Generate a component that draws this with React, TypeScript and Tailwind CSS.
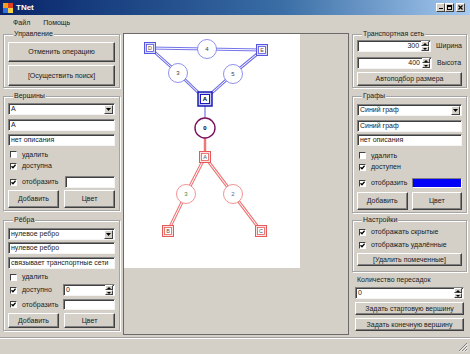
import React from 'react';

type Kids = { children?: React.ReactNode; className?: string };

const Btn: React.FC<Kids> = ({ children, className = '' }) => (
  <button
    type="button"
    className={`flex items-center justify-center bg-[#d4d0c8] border border-t-white border-l-white border-r-[#404040] border-b-[#404040] shadow-[inset_-1px_-1px_0_#808080] text-[7px] leading-[8px] text-[#202020] ${className}`}
  >
    {children}
  </button>
);

const Field: React.FC<Kids> = ({ children, className = '' }) => (
  <div
    className={`flex items-center bg-white border border-t-[#808080] border-l-[#808080] border-r-[#f4f4f4] border-b-[#f4f4f4] shadow-[inset_1px_1px_0_#404040] pl-[2px] overflow-hidden whitespace-nowrap ${className}`}
  >
    {children}
  </div>
);

const Combo: React.FC<{ value: string; className?: string }> = ({ value, className = '' }) => (
  <Field className={`h-[12px] pr-[1px] ${className}`}>
    <span className="flex-1">{value}</span>
    <span className="flex items-center justify-center w-[9px] h-[9px] bg-[#d4d0c8] border border-t-white border-l-white border-r-[#404040] border-b-[#404040]">
      <svg width="5" height="3" viewBox="0 0 5 3">
        <path d="M0 0 H5 L2.5 3 Z" fill="#000" />
      </svg>
    </span>
  </Field>
);

const Spin: React.FC<{ value: string; right?: boolean; className?: string }> = ({ value, right, className = '' }) => (
  <Field className={`h-[12px] pr-[1px] ${className}`}>
    <span className={`flex-1 ${right ? 'text-right pr-[2px]' : ''}`}>{value}</span>
    <span className="flex flex-col w-[8px] h-[10px]">
      <span className="flex-1 flex items-center justify-center bg-[#d4d0c8] border-[0.5px] border-t-white border-l-white border-r-[#404040] border-b-[#404040]">
        <svg width="4" height="2" viewBox="0 0 4 2">
          <path d="M0 2 H4 L2 0 Z" fill="#000" />
        </svg>
      </span>
      <span className="flex-1 flex items-center justify-center bg-[#d4d0c8] border-[0.5px] border-t-white border-l-white border-r-[#404040] border-b-[#404040]">
        <svg width="4" height="2" viewBox="0 0 4 2">
          <path d="M0 0 H4 L2 2 Z" fill="#000" />
        </svg>
      </span>
    </span>
  </Field>
);

const Check: React.FC<{ label: string; checked?: boolean; className?: string }> = ({ label, checked, className = '' }) => (
  <div className={`flex items-center pl-[2px] gap-[5px] ${className}`}>
    <span className="flex items-center justify-center w-[7px] h-[7px] bg-white border-[0.5px] border-t-[#404040] border-l-[#404040] border-r-white border-b-white">
      {checked && (
        <svg width="5" height="5" viewBox="0 0 5 5">
          <path d="M0.5 2.2 L2 3.8 L4.6 0.8" stroke="#000" strokeWidth="1.3" fill="none" />
        </svg>
      )}
    </span>
    <span>{label}</span>
  </div>
);

const Group: React.FC<Kids & { title: string }> = ({ title, children, className = '' }) => (
  <fieldset
    className={`min-w-0 border border-[#a4a4a4] shadow-[inset_1px_1px_0_#fff,1px_1px_0_#fff] px-[4px] flex flex-col ${className}`}
  >
    <legend className="ml-[5px] px-[1px] h-[8px] leading-[8px] bg-[#d4d0c8]">{title}</legend>
    {children}
  </fieldset>
);

const TitleBar = () => (
  <div className="h-[15px] flex items-center bg-linear-to-r from-[#0a246a] via-[#3a6ea5] via-60% to-[#a6caf0] pl-[3px] pr-[5px]">
    <svg width="10" height="10" viewBox="0 0 10 10">
      <rect x="0" y="0" width="5" height="5" fill="#f0a020" />
      <rect x="5" y="0" width="5" height="5" fill="#e04020" />
      <rect x="0" y="5" width="5" height="5" fill="#3070e0" />
      <rect x="5" y="5" width="5" height="5" fill="#f8d040" />
    </svg>
    <span className="ml-[3px] text-white font-bold text-[8px] leading-[10px]">TNet</span>
    <div className="ml-auto flex items-center">
      <span className="w-[9px] h-[9px] bg-[#d4d0c8] border-[0.5px] border-t-white border-l-white border-r-[#404040] border-b-[#404040] flex items-end justify-center pb-[2px]">
        <span className="w-[4px] h-[1.5px] bg-black" />
      </span>
      <span className="w-[9px] h-[9px] bg-[#d4d0c8] border-[0.5px] border-t-white border-l-white border-r-[#404040] border-b-[#404040] flex items-center justify-center">
        <span className="w-[5px] h-[5px] border border-black border-t-2" />
      </span>
      <span className="ml-[2px] w-[9px] h-[9px] bg-[#d4d0c8] border-[0.5px] border-t-white border-l-white border-r-[#404040] border-b-[#404040] flex items-center justify-center">
        <svg width="5" height="5" viewBox="0 0 5 5">
          <path d="M0.5 0.5 L4.5 4.5 M4.5 0.5 L0.5 4.5" stroke="#000" strokeWidth="1.2" />
        </svg>
      </span>
    </div>
  </div>
);

const blue = '#7474ea';
const red = '#ee7878';

const Edge = ({ pts, color, w = 3 }: { pts: string; color: string; w?: number }) => (
  <g>
    <polyline points={pts} fill="none" stroke={color} strokeWidth={w} />
    <polyline points={pts} fill="none" stroke="#fff" strokeWidth={w - 2} />
  </g>
);

const Circle = ({ x, y, label, color, text = '#404040' }: { x: number; y: number; label: string; color: string; text?: string }) => (
  <g>
    <circle cx={x} cy={y} r="9.5" fill="#fff" stroke={color} strokeWidth="0.8" />
    <text x={x} y={y + 2} fontSize="6" textAnchor="middle" fill={text} fontFamily="Liberation Sans, Arial, sans-serif">
      {label}
    </text>
  </g>
);

const Square = ({ x, y, label, color, fill }: { x: number; y: number; label: string; color: string; fill: string }) => (
  <g>
    <rect x={x - 5.5} y={y - 5.5} width="11" height="11" fill={fill} stroke={color} strokeWidth="1" />
    <rect x={x - 3.5} y={y - 3.5} width="7" height="7" fill="#fff" stroke={color} strokeWidth="0.8" />
    <text x={x} y={y + 2} fontSize="5.5" textAnchor="middle" fill="#505050" fontFamily="Liberation Sans, Arial, sans-serif">
      {label}
    </text>
  </g>
);

const Graph = () => (
  <svg width="176" height="234" viewBox="0 0 176 234">
    <Edge pts="26,14 83,15 138,16" color={blue} />
    <Edge pts="26,14 54,39 81,65" color={blue} />
    <Edge pts="138,16 109,40 81,65" color={blue} />
    <line x1="81" y1="65" x2="81" y2="94" stroke="#5a5ad8" strokeWidth="1" />
    <line x1="81" y1="94" x2="81" y2="123" stroke={red} strokeWidth="2.5" />
    <Edge pts="81,123 62,160 44,197" color={red} />
    <Edge pts="81,123 109,160 137,197" color={red} />

    <Square x={26} y={14} label="D" color="#5656e0" fill="#d8d8fa" />
    <Square x={138} y={16} label="E" color="#5656e0" fill="#d8d8fa" />
    <Circle x={83} y={15} label="4" color={blue} />
    <Circle x={54} y={39} label="3" color={blue} />
    <Circle x={109} y={40} label="5" color={blue} />

    <rect x="74" y="58" width="14" height="14" fill="#c8c8f4" stroke="#1c1cb8" strokeWidth="1.5" />
    <rect x="76.5" y="60.5" width="9" height="9" fill="#fff" stroke="#1c1cb8" strokeWidth="1" />
    <text x="81" y="67.3" fontSize="6" fontWeight="bold" textAnchor="middle" fill="#000" fontFamily="Liberation Sans, Arial, sans-serif">
      A
    </text>

    <circle cx="81" cy="94" r="10" fill="#fff" stroke="#7a1060" strokeWidth="1.4" />
    <text x="81" y="96" fontSize="6" fontWeight="bold" textAnchor="middle" fill="#000" fontFamily="Liberation Sans, Arial, sans-serif">
      0
    </text>

    <Square x={81} y={123} label="A" color="#e85a5a" fill="#fbe2e2" />
    <Circle x={62} y={160} label="3" color={red} text="#3a8a3a" />
    <Circle x={109} y={160} label="2" color={red} text="#5a6a8a" />
    <Square x={44} y={197} label="B" color="#e85a5a" fill="#fbe2e2" />
    <Square x={137} y={197} label="C" color="#e85a5a" fill="#fbe2e2" />
  </svg>
);

export default function App() {
  return (
    <div className="w-[470px] h-[354px] bg-[#d4d0c8] flex flex-col overflow-hidden font-['Liberation_Sans',Arial,sans-serif] text-[7px] leading-[8px] text-[#202020] select-none">
      <TitleBar />

      <div className="h-[15px] flex items-center gap-[13px] pl-[13px]">
        <span>Файл</span>
        <span>Помощь</span>
      </div>

      <div className="h-[307px] flex px-[3px] gap-[3px]">
        {/* left column */}
        <div className="w-[117px] flex flex-col">
          <Group title="Управление" className="h-[58px]">
            <Btn className="mt-[4px] h-[20px]">Отменить операцию</Btn>
            <Btn className="mt-[3px] h-[21px]">[Осуществить поиск]</Btn>
          </Group>

          <Group title="Вершины" className="mt-[4px] h-[119px]">
            <Combo className="mt-[3px]" value="A" />
            <Field className="mt-[4px] h-[12px]">A</Field>
            <Field className="mt-[3px] h-[12px]">нет описания</Field>
            <Check className="mt-[3px] h-[11px]" label="удалить" />
            <Check className="h-[12px]" checked label="доступна" />
            <div className="mt-[4px] h-[12px] flex items-center">
              <Check checked label="отобразить" />
              <Field className="ml-auto w-[50px] h-[12px]" />
            </div>
            <div className="mt-[2px] h-[18px] grid grid-cols-2 gap-[5px]">
              <Btn>Добавить</Btn>
              <Btn>Цвет</Btn>
            </div>
          </Group>

          <Group title="Рёбра" className="mt-[5px] h-[115px]">
            <Combo className="mt-[4px]" value="нулевое ребро" />
            <Field className="mt-[2px] h-[12px]">нулевое ребро</Field>
            <Field className="mt-[3px] h-[12px]">связывает транспортные сети</Field>
            <Check className="mt-[2px] h-[12px]" label="удалить" />
            <div className="mt-[1px] h-[12px] flex items-center">
              <Check checked label="доступно" />
              <Spin className="ml-auto w-[52px]" value="0" />
            </div>
            <div className="mt-[3px] h-[11px] flex items-center">
              <Check checked label="отобразить" />
              <Field className="ml-auto w-[52px] h-[11px]" />
            </div>
            <div className="mt-[3px] h-[15px] grid grid-cols-2 gap-[5px]">
              <Btn>Добавить</Btn>
              <Btn>Цвет</Btn>
            </div>
          </Group>
        </div>

        {/* canvas */}
        <div className="mt-[3px] w-[226px] h-[302px] border border-[#6a6a6a]">
          <div className="w-[176px] h-[234px] bg-white">
            <Graph />
          </div>
        </div>

        {/* right column */}
        <div className="w-[115px] flex flex-col">
          <Group title="Транспортная сеть" className="h-[58px]">
            <div className="mt-[2px] h-[12px] flex items-center">
              <Spin className="w-[75px]" value="300" right />
              <span className="ml-[5px]">Ширина</span>
            </div>
            <div className="mt-[5px] h-[12px] flex items-center">
              <Spin className="w-[75px]" value="400" right />
              <span className="ml-[5px]">Высота</span>
            </div>
            <Btn className="mt-[3px] h-[14px]">Автоподбор размера</Btn>
          </Group>

          <Group title="Графы" className="mt-[4px] h-[121px]">
            <Combo className="mt-[4px]" value="Синий граф" />
            <Field className="mt-[4px] h-[12px]">Синий граф</Field>
            <Field className="mt-[2px] h-[12px]">нет описания</Field>
            <Check className="mt-[4px] h-[11px]" label="удалить" />
            <Check className="h-[12px]" checked label="доступен" />
            <div className="mt-[4px] h-[12px] flex items-center">
              <Check checked label="отобразить" />
              <div className="ml-auto w-[50px] h-[10px] bg-[#0000f8] border border-t-[#808080] border-l-[#808080] border-r-white border-b-white" />
            </div>
            <div className="mt-[3px] h-[18px] grid grid-cols-2 gap-[4px]">
              <Btn>Добавить</Btn>
              <Btn>Цвет</Btn>
            </div>
          </Group>

          <Group title="Настройки" className="mt-[3px] h-[56px]">
            <Check className="mt-[2px] h-[12px]" checked label="отображать скрытые" />
            <Check className="mt-[1px] h-[12px]" checked label="отображать удалённые" />
            <Btn className="mt-[2px] h-[13px]">[Удалить помеченные]</Btn>
          </Group>

          <div className="mt-[4px] pl-[5px] h-[8px]">Количество пересадок</div>
          <div className="px-[3px] flex flex-col">
            <Spin className="mt-[3px] w-full h-[12px]" value="0" />
            <Btn className="mt-[3px] h-[13px]">Задать стартовую вершину</Btn>
            <Btn className="mt-[3px] h-[13px]">Задать конечную вершину</Btn>
          </div>
        </div>
      </div>

      <div className="h-[17px] border-t border-[#a0a0a0] shadow-[inset_0_1px_0_#fff] flex items-end justify-end pr-[2px] pb-[2px]">
        <svg width="10" height="10" viewBox="0 0 10 10">
          <path d="M9 1 L1 9 M9 4 L4 9 M9 7 L7 9" stroke="#808080" strokeWidth="1" />
          <path d="M9.8 1.8 L1.8 9.8 M9.8 4.8 L4.8 9.8 M9.8 7.8 L7.8 9.8" stroke="#fff" strokeWidth="0.8" />
        </svg>
      </div>
    </div>
  );
}
